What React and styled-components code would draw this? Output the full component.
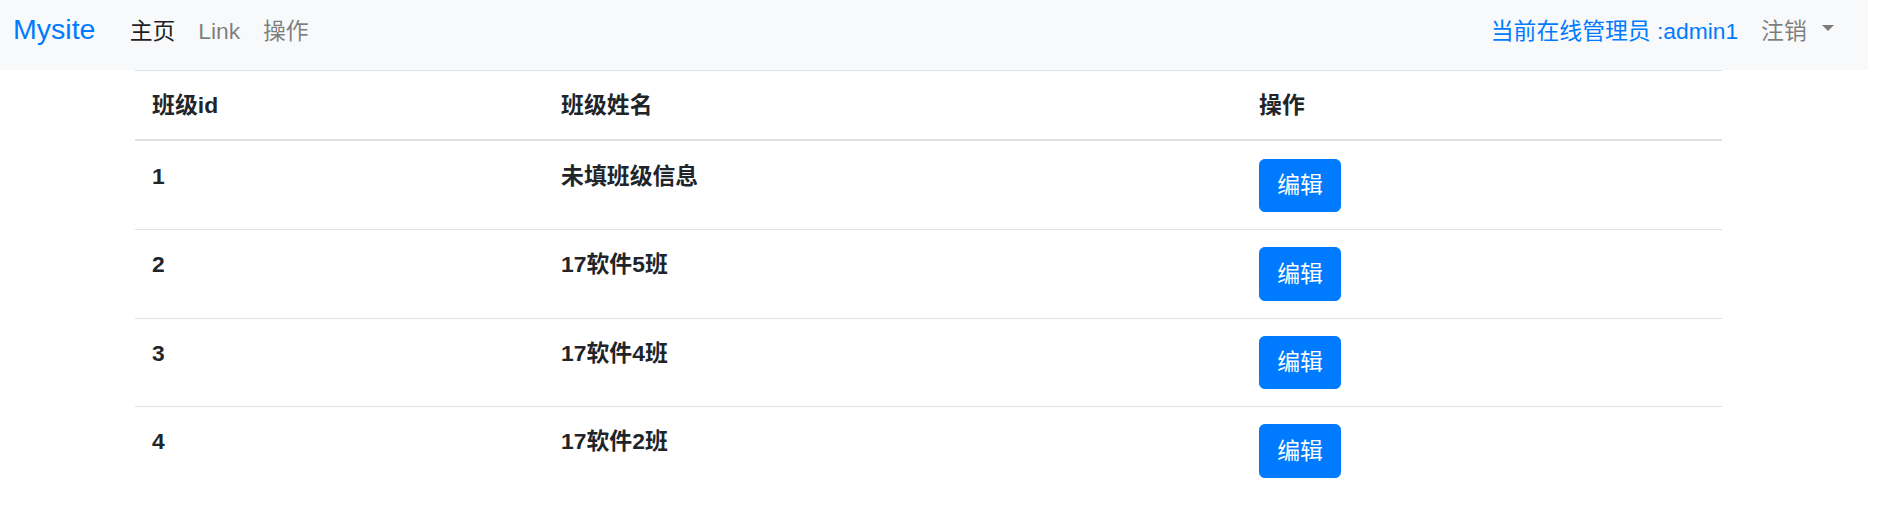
import React from 'react'
import styled, { createGlobalStyle } from 'styled-components'

//Global
const GlobalStyle = createGlobalStyle`
    body {
        margin: 0;
        background: #fff;
        font-family: "Liberation Sans", "Noto Sans CJK SC", sans-serif;
        font-size: 22.85px;
        line-height: 1.5;
        color: #212529;
    }
`

//Styles
const Navbar = styled.nav`
    width: calc(100% - 9px);
    height: 70px;
    box-sizing: border-box;
    background: #f8f9fa;
    display: flex;
    align-items: baseline;
    padding: 8px 22.85px 0 13px;
`
const Brand = styled.a`
    font-size: 28.56px;
    line-height: 1.5;
    color: #007bff;
    text-decoration: none;
    margin-right: 22.85px;
`
const NavList = styled.div`
    display: flex;
    align-items: baseline;
    margin-left: ${props => props.$right ? 'auto' : '0'};
`
const NavLink = styled.a`
    padding: 0 11.4px;
    color: ${props => props.$color || 'rgba(0, 0, 0, 0.5)'};
    text-decoration: none;
    display: flex;
    align-items: center;
`
const Caret = styled.span`
    display: inline-block;
    width: 0;
    height: 0;
    margin-left: 15px;
    border-top: 6.8px solid rgba(0, 0, 0, 0.5);
    border-left: 6px solid transparent;
    border-right: 6px solid transparent;
    transform: translateY(-3px);
`
const Table = styled.table`
    margin-left: 135px;
    width: 1587px;
    border-collapse: collapse;
    table-layout: fixed;
`
const Cell = styled.th`
    box-sizing: border-box;
    text-align: left;
    vertical-align: top;
    padding: 17.1px;
    font-weight: bold;
    border-top: 1px solid #dee2e6;
    border-bottom: ${props => props.$head ? '2px solid #dee2e6' : 'none'};
    width: ${props => props.$w || 'auto'};
`
const EditButton = styled.button`
    font-family: inherit;
    font-size: 22.85px;
    line-height: 1.5;
    color: #fff;
    background: #007bff;
    border: 1.4px solid #007bff;
    border-radius: 5.7px;
    padding: 8.57px 17.1px;
    cursor: pointer;
`

const classes = [
    { id: 1, name: '未填班级信息' },
    { id: 2, name: '17软件5班' },
    { id: 3, name: '17软件4班' },
    { id: 4, name: '17软件2班' },
]

//Main Component
function App() {
    return (
        <>
        <GlobalStyle />
        <Navbar>
            <Brand href="#">Mysite</Brand>
            <NavList>
                <NavLink href="#" $color="rgba(0, 0, 0, 0.9)">主页</NavLink>
                <NavLink href="#">Link</NavLink>
                <NavLink href="#">操作</NavLink>
            </NavList>
            <NavList $right>
                <NavLink href="#" $color="#007bff">当前在线管理员 :admin1</NavLink>
                <NavLink href="#">注销<Caret /></NavLink>
            </NavList>
        </Navbar>
        <Table>
            <thead>
                <tr>
                    <Cell $head $w="409px">班级id</Cell>
                    <Cell $head $w="698px">班级姓名</Cell>
                    <Cell $head>操作</Cell>
                </tr>
            </thead>
            <tbody>
                {classes.map(c => (
                    <tr key={c.id}>
                        <Cell>{c.id}</Cell>
                        <Cell>{c.name}</Cell>
                        <Cell><EditButton>编辑</EditButton></Cell>
                    </tr>
                ))}
            </tbody>
        </Table>
        </>
    )
}

export default App;
